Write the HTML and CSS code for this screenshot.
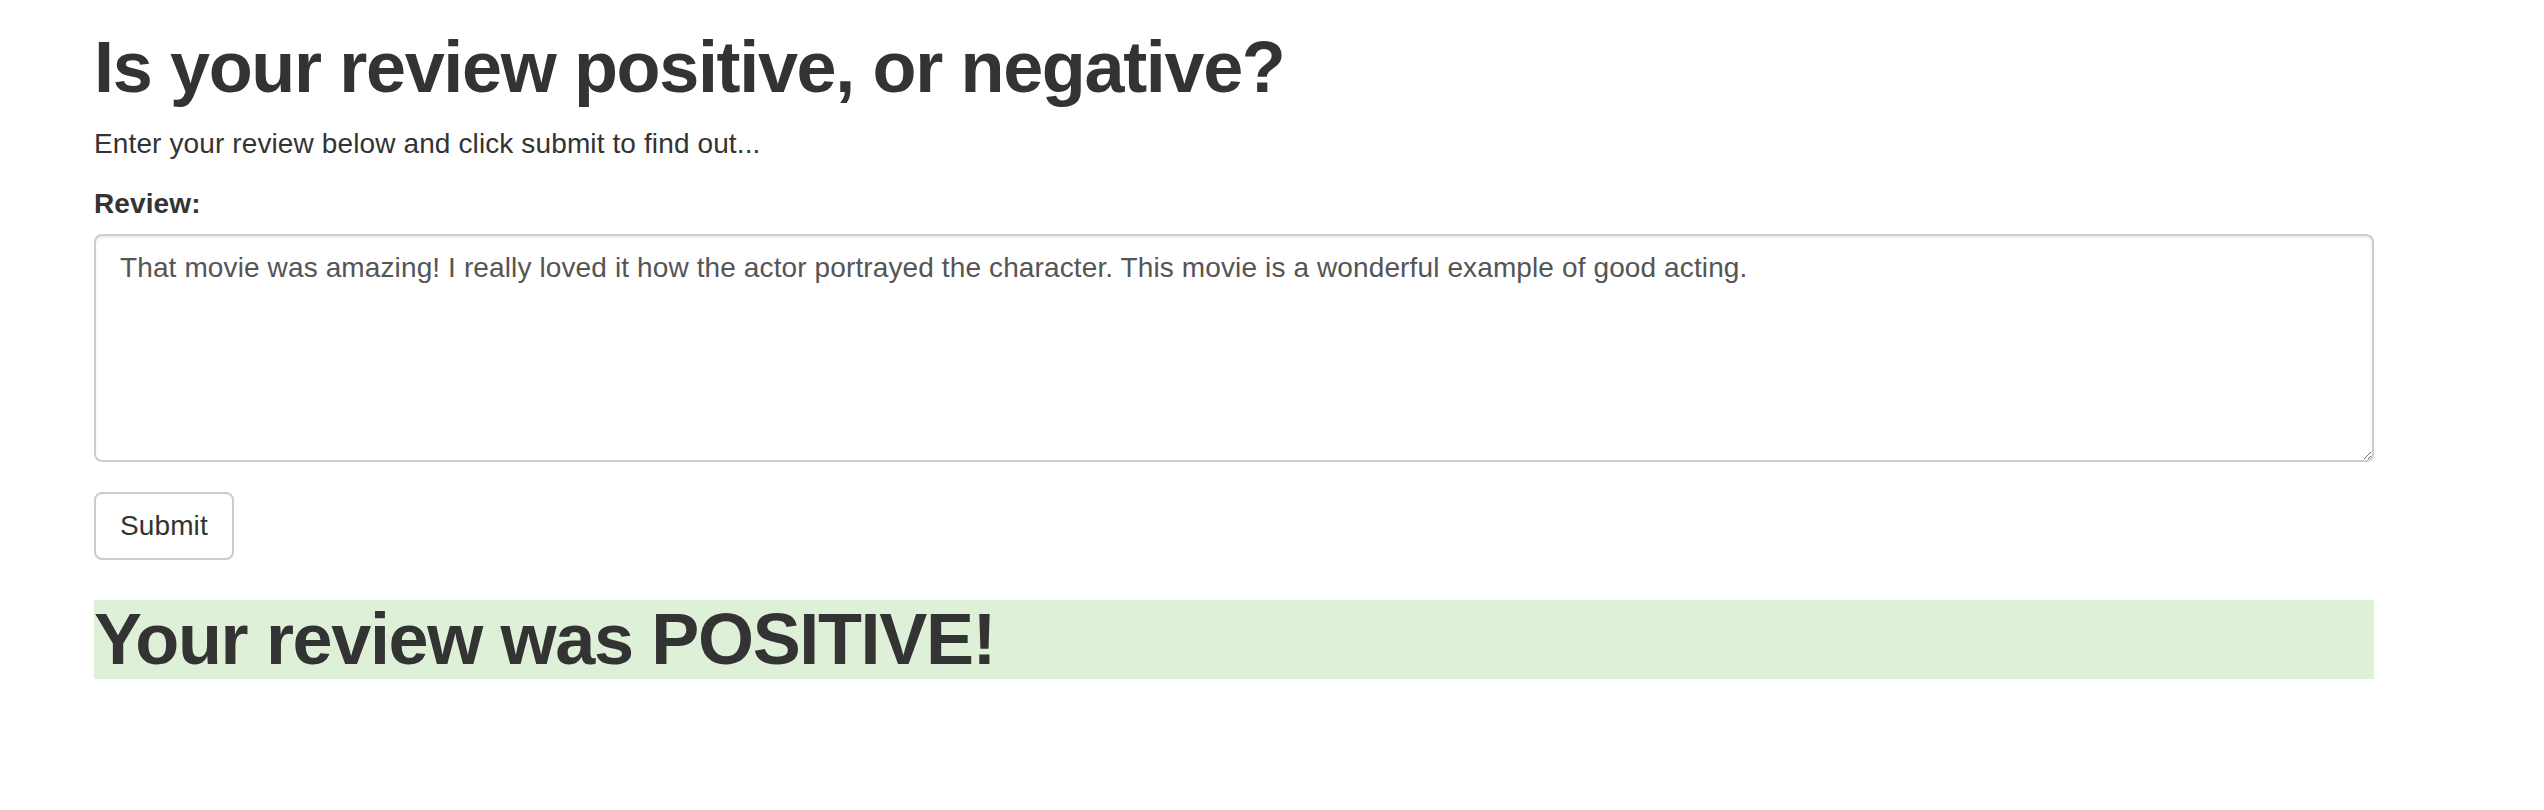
FILE: index.html
```html
<!DOCTYPE html>
<html>
<head>
<meta charset="utf-8">
<title>Sentiment</title>
<link rel="stylesheet" href="styles.css">
</head>
<body>
<div class="container">
  <h1 class="title">Is your review positive, or negative?</h1>
  <p class="lead-text">Enter your review below and click submit to find out...</p>
  <form class="review-form">
    <div class="form-group">
      <label class="form-label" for="review">Review:</label>
      <textarea class="form-control" id="review" rows="5">That movie was amazing! I really loved it how the actor portrayed the character. This movie is a wonderful example of good acting.</textarea>
    </div>
    <button type="button" class="btn">Submit</button>
  </form>
  <h1 class="result">Your review was POSITIVE!</h1>
</div>
</body>
</html>
```
FILE: styles.css
```css
html, body {
  margin: 0;
  padding: 0;
  background: #fff;
}
body {
  font-family: "Liberation Sans", Arial, Helvetica, sans-serif;
  font-size: 28px;
  line-height: 40px;
  color: #333;
  letter-spacing: 0.12px;
}
.container {
  width: 2280px;
  padding: 28px 0 0 94px;
}
.title {
  margin: 0 0 17px 0;
  font-size: 72px;
  line-height: 79.2px;
  font-weight: 700;
  letter-spacing: -1.35px;
  color: #333;
}
.lead-text {
  margin: 0 0 20px 0;
}
.review-form {
  margin: 0;
}
.form-group {
  margin-bottom: 30px;
}
.form-label {
  display: block;
  font-weight: 700;
  margin-bottom: 10px;
}
.form-control {
  display: block;
  box-sizing: border-box;
  width: 100%;
  height: 228px;
  padding: 12px 24px;
  font-family: inherit;
  font-size: 28px;
  line-height: 40px;
  letter-spacing: 0.12px;
  color: #555;
  background: #fff;
  border: 2px solid #ccc;
  border-radius: 8px;
  box-shadow: inset 0 2px 2px rgba(0, 0, 0, 0.075);
  margin: 0;
  outline: none;
}
.btn {
  display: inline-block;
  box-sizing: border-box;
  height: 68px;
  padding: 12px 24px;
  font-family: inherit;
  font-size: 28px;
  line-height: 40px;
  letter-spacing: 0.12px;
  color: #333;
  background: #fff;
  border: 2px solid #ccc;
  border-radius: 8px;
  margin: 0;
}
.result {
  margin: 40px 0 0 0;
  font-size: 72px;
  line-height: 79.2px;
  font-weight: 700;
  letter-spacing: -1.35px;
  background: #dff0d8;
  color: #333;
}
```
